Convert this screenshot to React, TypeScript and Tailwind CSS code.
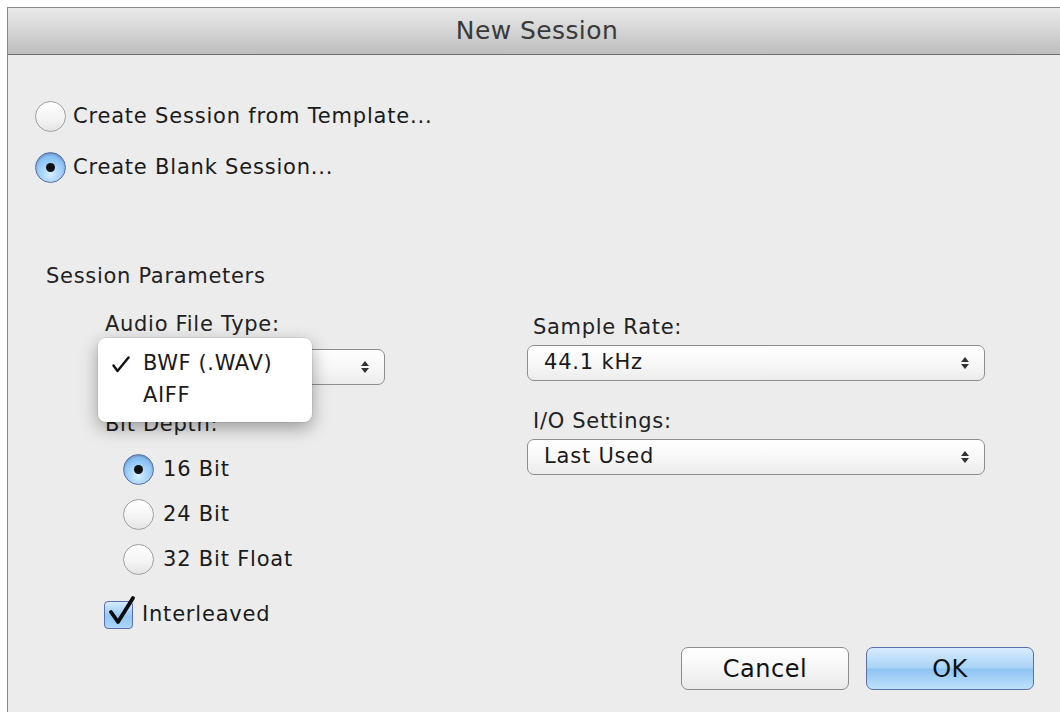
import React from "react";

const font = { fontFamily: '"DejaVu Sans", "Liberation Sans", sans-serif' };

const Radio = ({ checked }: { checked?: boolean }) => (
    <span
        className={`flex items-center justify-center w-[31px] h-[31px] rounded-full border shrink-0 ${checked
            ? "border-[#5d6fa8] bg-[radial-gradient(circle_at_50%_72%,#d6eeff_0%,#92c8f6_55%,#6ea8e2_100%)] shadow-[inset_0_1px_2px_rgba(0,0,0,0.25)]"
            : "border-[#a0a0a0] bg-[linear-gradient(#ffffff,#f3f3f3_60%,#e4e4e4)]"}`}
    >
        {checked ? <span className="w-[9px] h-[9px] rounded-full bg-[#111]" /> : null}
    </span>
);

const Arrows = () => (
    <svg width="10" height="16" viewBox="0 0 10 16" className="shrink-0">
        <path d="M5 2 L9 7 L1 7 Z" fill="#333" />
        <path d="M5 14 L9 9 L1 9 Z" fill="#333" />
    </svg>
);

const Select = ({ value, className }: { value?: string; className?: string }) => (
    <div className={`flex items-center justify-between h-[36px] pl-[16px] pr-[14px] rounded-[7px] border border-[#8e8e8e] bg-[linear-gradient(#ffffff,#f7f7f7_55%,#ececec)] text-[21px] tracking-[0.8px] text-[#1a1a1a] ${className ?? ""}`}>
        <span>{value}</span>
        <Arrows />
    </div>
);

const Label = ({ children, className }: { children: React.ReactNode; className?: string }) => (
    <div className={`text-[21px] leading-[22px] tracking-[0.7px] text-[#222] ${className ?? ""}`}>{children}</div>
);

const RadioRow = ({ checked, label, gap }: { checked?: boolean; label: string; gap: string }) => (
    <div className={`flex items-center h-[31px] ${gap}`}>
        <Radio checked={checked} />
        <span className="text-[21px] tracking-[0.8px] text-[#1a1a1a] leading-none">{label}</span>
    </div>
);

const App = () => {
    return (
        <div className="w-[1060px] h-[712px] bg-white pt-[7px] pl-[7px] overflow-hidden" style={font}>
            <div className="h-full border-l border-t border-[#8a8a8a] bg-[#ececec] flex flex-col">
                {/* Title bar */}
                <div className="h-[47px] shrink-0 flex items-center justify-center border-b border-[#6e6e6e] bg-[linear-gradient(#e9e9e9,#d9d9d9_40%,#bdbdbd)]">
                    <span className="text-[25px] text-[#3a3a3a] tracking-[0.4px] pl-[6px]">New Session</span>
                </div>

                {/* Body */}
                <div className="flex-1 flex flex-col pl-[27px] pt-[46px]">
                    <RadioRow gap="gap-[7px]" label="Create Session from Template..." />
                    <div className="mt-[20px]">
                        <RadioRow gap="gap-[7px]" checked label="Create Blank Session..." />
                    </div>

                    <Label className="mt-[82px] ml-[11px]">Session Parameters</Label>

                    <div className="flex mt-[26px]">
                        {/* Left column */}
                        <div className="w-[492px] pl-[65px] shrink-0 flex flex-col">
                            <Label className="ml-[5px]">Audio File Type:</Label>
                            <div className="relative mt-[14px] w-[285px]">
                                {/* popup button; its value sits under the open menu */}
                                <Select className="h-[34px]" />
                                <div className="absolute left-[-2px] top-[-11px] w-[214px] h-[84px] rounded-[8px] bg-white shadow-[0_6px_18px_rgba(0,0,0,0.35),0_0_0_1px_rgba(0,0,0,0.06)] flex flex-col pt-[13px] text-[21px] tracking-[0.6px] text-[#1a1a1a]">
                                    <div className="flex items-center h-[26px]">
                                        <span className="w-[45px] pl-[14px] flex items-center">
                                            <svg width="18" height="17" viewBox="0 0 18 17">
                                                <path d="M1.5 9.5 L5.5 15 L16.5 1.5" fill="none" stroke="#111" strokeWidth="2.4" strokeLinecap="round" strokeLinejoin="round" />
                                            </svg>
                                        </span>
                                        <span>BWF (.WAV)</span>
                                    </div>
                                    <div className="flex items-center h-[26px] mt-[6px]">
                                        <span className="w-[45px]" />
                                        <span>AIFF</span>
                                    </div>
                                </div>
                            </div>
                            <Label className="mt-[28px] ml-[5px]">Bit Depth:</Label>
                            <div className="ml-[23px] mt-[19px] flex flex-col gap-[14px]">
                                <RadioRow gap="gap-[9px]" checked label="16 Bit" />
                                <RadioRow gap="gap-[9px]" label="24 Bit" />
                                <RadioRow gap="gap-[9px]" label="32 Bit Float" />
                            </div>
                            <div className="flex items-center mt-[25px] ml-[4px] h-[30px]">
                                <span className="relative w-[29px] h-[28px] rounded-[4px] border border-[#5d6fa8] bg-[linear-gradient(#d6ecff,#92c8f6_55%,#acd6f9)] shrink-0">
                                    <svg width="34" height="34" viewBox="0 0 34 34" className="absolute left-[-1px] top-[-6px]">
                                        <path d="M7 16 L14 26 L29 2" fill="none" stroke="#0d0d0d" strokeWidth="3.8" strokeLinecap="round" strokeLinejoin="round" />
                                    </svg>
                                </span>
                                <span className="ml-[9px] text-[21px] tracking-[0.8px] text-[#1a1a1a]">Interleaved</span>
                            </div>
                        </div>

                        {/* Right column */}
                        <div className="w-[458px] shrink-0 flex flex-col pt-[3px]">
                            <Label className="ml-[6px]">Sample Rate:</Label>
                            <Select value="44.1 kHz" className="mt-[7px]" />
                            <Label className="ml-[6px] mt-[29px]">I/O Settings:</Label>
                            <Select value="Last Used" className="mt-[7px]" />
                        </div>
                    </div>

                    {/* Buttons */}
                    <div className="flex justify-end gap-[17px] pr-[26px] mt-auto mb-[22px]">
                        <button className="w-[168px] h-[43px] rounded-[7px] border border-[#8c8c8c] bg-[linear-gradient(#ffffff,#f6f6f6_50%,#e9e9e9)] text-[24px] tracking-[0.5px] text-[#111]">
                            Cancel
                        </button>
                        <button className="w-[168px] h-[43px] rounded-[7px] border border-[#5b6ea6] bg-[linear-gradient(#d7ecfd,#a9d3f6_48%,#8fc4f2_52%,#bfe1fb)] text-[24px] tracking-[0.5px] text-[#111]">
                            OK
                        </button>
                    </div>
                </div>
            </div>
        </div>
    );
};

export default App;
